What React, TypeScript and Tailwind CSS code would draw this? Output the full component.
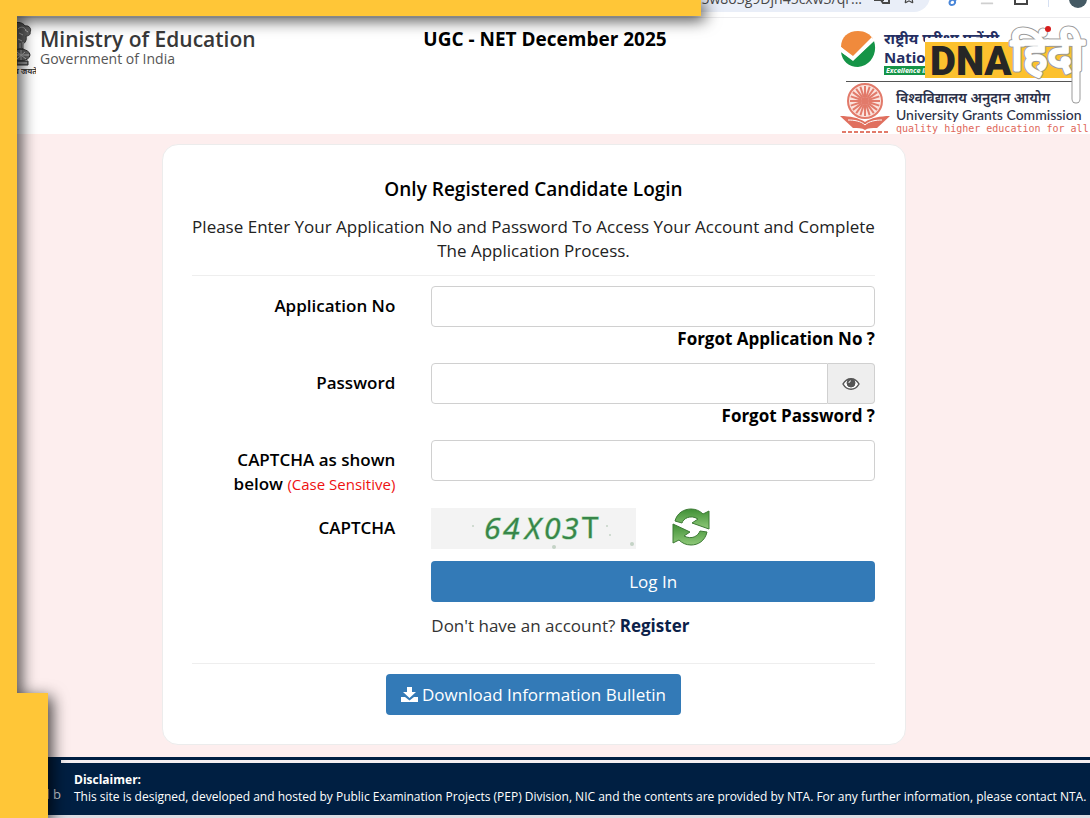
import { useState } from 'react'
import { FaBars, FaRegStar } from 'react-icons/fa'

const inputClasses =
  'h-[41px] w-full min-w-0 border border-[#d0d0d0] bg-white px-3 text-[17px] text-[#333] outline-none focus:border-[#66afe9]'

function BrowserBar() {
  return (
    <div className="flex h-[18px] items-start overflow-hidden border-b border-[#ececee] bg-white">
      <div className="-mt-5 flex h-8 flex-1 items-end justify-end gap-3 rounded-r-2xl bg-[#e9eef8] pr-3.5 pb-1 text-[#474747]">
        <span className="text-[14px] leading-[18px]">1bzc5w8o3g9Djh45cxw3/qr...</span>
        <svg className="mb-1" width="16" height="16" viewBox="0 0 16 16" fill="none" stroke="currentColor" strokeWidth="2">
          <path d="M1 1h8v11H1z" fill="currentColor" />
          <path d="M7 5h8v10H9l-2-3z" />
        </svg>
        <FaRegStar className="mb-1" size={14} />
      </div>
      <div className="-mt-2.5 flex w-[160px] items-center gap-5 pl-4">
        <svg width="14" height="16" viewBox="0 0 14 16" fill="none" stroke="#4a86d8" strokeWidth="2">
          <path d="M12 3 9 10M8 9c-5-1-6 5-2 5 3 0 4-3 2-5" />
        </svg>
        <FaBars className="text-[#cfcfcf]" size={14} />
        <svg width="14" height="16" viewBox="0 0 14 16" fill="none" stroke="#444" strokeWidth="2">
          <path d="M1 1v12h12V1" />
        </svg>
        <span className="h-4 w-px bg-[#d6e0f2]" />
        <span className="size-[18px] shrink-0 rounded-full bg-[#455a64]" />
      </div>
    </div>
  )
}

function Emblem() {
  return (
    <svg className="shrink-0" width="24" height="54" viewBox="0 0 24 54" aria-label="State emblem">
      <g fill="#666" stroke="#333" strokeWidth="1">
        <path d="M0 3c3-4 11-3 13 1 4-1 7 3 5 6 1 3-2 4-4 4 1 4-1 7-3 8v6H0z" />
        <ellipse cx="8" cy="33" rx="10" ry="6" />
        <path d="M0 39h16v4H0z" />
      </g>
      <g stroke="#c4c4c4" fill="none" strokeWidth="1">
        <path d="M6 7c3-3 6-2 8 1M7 11l4 2M13 8l3 2M6 17l4 2M8 21v5M11 20v6M5 33h12M9 28v10M5 30l9 7M13 30l-8 7M6 41h9" />
      </g>
      <text x="2" y="52" fontSize="8" fontWeight="700" fill="#444">
        व जयते
      </text>
    </svg>
  )
}

function NtaLogo() {
  return (
    <svg className="shrink-0" width="36" height="38" viewBox="0 0 36 38" aria-label="NTA">
      <path d="M1 17C1 7 8 1 18 1c7 0 12 3 15 8L13 28z" fill="#f08a3c" />
      <path d="M34 11c4 12-3 25-16 26C9 37 2 31 1 22l12 8z" fill="#159447" />
      <path d="M1 17l12 9L32 7l2 4-21 20L1 22z" fill="#fff" />
    </svg>
  )
}

const spokes = Array.from({ length: 20 }, (_, i) => i * 18)

function UgcLogo() {
  return (
    <svg className="shrink-0" width="50" height="51" viewBox="0 0 50 51" aria-label="UGC">
      <circle cx="25" cy="19" r="17" fill="#fbe3dd" stroke="#e27a6a" strokeWidth="2" />
      {spokes.map((angle) => (
        <path key={angle} d="M25 15V4" stroke="#e27a6a" strokeWidth="2" transform={`rotate(${angle} 25 19)`} />
      ))}
      <circle cx="25" cy="19" r="4" fill="#e27a6a" />
      <path d="M0 34c10 0 19 2 25 6 6-4 15-6 25-6L37 46c-5 0-9 0-12 2-3-2-7-2-12-2z" fill="#e0705f" />
      <path d="M8 38c6 0 13 1 17 5 4-4 11-5 17-5" fill="none" stroke="#fff" strokeWidth="1" />
      <path d="M2 50h46" stroke="#e27a6a" strokeWidth="2" strokeDasharray="4 2" />
    </svg>
  )
}

function DnaLogo() {
  return (
    <svg className="absolute top-0 right-0" width="170" height="90" viewBox="0 0 170 90" aria-label="DNA हिंदी">
      <path d="M5 21h147v39H5z" fill="#fcc12e" />
      <path d="M5 22h90" stroke="#fff" strokeWidth="4" />
      <text x="10" y="57" fontFamily="Roboto" fontWeight="900" fontSize="40" fill="#262626">
        DNA
      </text>
      <g
        fontFamily="Noto Sans, Noto Sans Devanagari, sans-serif"
        fontWeight="400"
        fontSize="46"
        strokeLinecap="round"
        strokeLinejoin="round"
      >
        <text x="91" y="52" fill="#9a9a9a" stroke="#9a9a9a" strokeWidth="5">
          हिंदी
        </text>
        <path d="M156 24v57" stroke="#9a9a9a" strokeWidth="9" />
        <text x="91" y="52" fill="#fff" stroke="#fff" strokeWidth="3">
          हिंदी
        </text>
        <path d="M156 24v57" stroke="#fff" strokeWidth="7" />
      </g>
      <circle cx="128" cy="11" r="3" fill="#d61c1c" />
    </svg>
  )
}

function Header() {
  return (
    <header className="relative grid h-[116px] grid-cols-[1fr_auto_1fr] items-start bg-white">
      <div className="flex items-start gap-1 pt-1 pl-3">
        <Emblem />
        <div className="pt-1 text-[#383838]">
          <p className="text-[21px] leading-[26px] font-semibold">Ministry of Education</p>
          <p className="text-[14px] leading-[14px] text-[#555]">Government of India</p>
        </div>
      </div>
      <h1 className="pt-2 text-[19px] leading-[26px] font-bold text-black">UGC - NET December 2025</h1>
      <div className="w-[250px] justify-self-end overflow-hidden pt-2.5 whitespace-nowrap">
        <div className="mr-4 ml-1.5 flex h-[54px] items-start gap-2 border-b border-[#555]">
          <div className="-ml-1.5 pt-0.5">
            <NtaLogo />
          </div>
          <div className="text-[#242e62]">
            <p className="text-[15px] leading-[20px] font-bold">राष्ट्रीय परीक्षा एजेंसी</p>
            <p className="text-[15px] leading-[18px] font-bold">National Testing Agency</p>
            <p className="w-fit bg-[#159447] px-0.5 text-[7px] leading-[9px] font-bold text-white italic">
              Excellence in Assessment
            </p>
          </div>
        </div>
        <div className="flex items-start gap-1.5">
          <UgcLogo />
          <div className="pt-2 text-[#2b3149]">
            <p className="text-[14px] leading-[16px] font-semibold">विश्वविद्यालय अनुदान आयोग</p>
            <p className="font-[Lato,sans-serif] text-[14px] leading-[17px] font-medium">University Grants Commission</p>
            <p className="font-['DejaVu_Sans_Mono',monospace] text-[10px] leading-[12px] text-[#e0685a]">
              quality higher education for all
            </p>
          </div>
        </div>
      </div>
      <DnaLogo />
    </header>
  )
}

function CaptchaImage() {
  return (
    <svg width="205" height="41" viewBox="0 0 205 41" role="img" aria-label="CAPTCHA text">
      <path d="M0 0h205v41H0z" fill="#f3f3f3" />
      <g fontFamily="Open Sans" fontSize="30" fill="#38864a" stroke="#9bd6a4" strokeWidth="1" paintOrder="stroke">
        <text y="31" fontStyle="italic">
          <tspan x="53">6</tspan>
          <tspan x="72">4</tspan>
          <tspan x="94">X</tspan>
          <tspan x="113">0</tspan>
          <tspan x="131">3</tspan>
        </text>
        <text x="151" y="30">
          T
        </text>
      </g>
      <g fill="#c4d3c6">
        <circle cx="42" cy="18" r="1" />
        <circle cx="176" cy="18" r="1" />
        <circle cx="179" cy="27" r="1" />
        <circle cx="123" cy="39" r="2" />
        <circle cx="201" cy="36" r="2" />
      </g>
    </svg>
  )
}

function RefreshIcon() {
  return (
    <svg width="38" height="38" viewBox="0 0 38 38">
      <defs>
        <linearGradient id="leaf" x1="0" y1="0" x2="0" y2="1">
          <stop offset="0" stopColor="#3f8f35" />
          <stop offset="1" stopColor="#8fc979" />
        </linearGradient>
      </defs>
      <g fill="url(#leaf)" stroke="#3d7a35" strokeWidth="1">
        <path d="M3 13C5 5 12 1 19 1c5 0 9 2 12 5l6-3v18l-17-6 6-4c-8-5-15 0-16 4z" />
        <path d="M35 24c-2 9-9 13-16 13-5 0-9-2-12-5l-6 3V16l17 8-6 4c8 4 14 0 16-5z" />
      </g>
    </svg>
  )
}

function EyeIcon() {
  return (
    <svg width="18" height="14" viewBox="0 0 18 14" fill="none" stroke="#555" strokeWidth="1">
      <path d="M1 7c4-7 12-7 16 0-4 7-12 7-16 0z" fill="#fff" strokeWidth="1.5" />
      <circle cx="9" cy="6" r="4" fill="#555" />
      <path d="M7 6c0-2 1-2 2-2" stroke="#fff" />
    </svg>
  )
}

function DownloadIcon() {
  return (
    <svg width="17" height="16" viewBox="0 0 17 16" fill="currentColor">
      <path d="M6 0h5v5h4L8.500 11 2 5h4z" />
      <path d="M0 10h4l4.500 3.500L13 10h4v5H0z" />
    </svg>
  )
}

function LoginCard() {
  const [showPassword, setShowPassword] = useState(false)

  return (
    <section className="w-full max-w-[744px] rounded-2xl border border-[#ececec] bg-white pt-[31px] pr-[30px] pb-[29px] pl-[29px]">
      <h2 className="text-center text-[19px] leading-[26px] font-semibold text-black">Only Registered Candidate Login</h2>
      <p className="mt-[13px] border-b border-[#eee] pb-3 text-center text-[17px] leading-[24px] text-[#222]">
        Please Enter Your Application No and Password To Access Your Account and Complete The Application Process.
      </p>

      <form
        className="mt-2.5 grid grid-cols-[203fr_443fr] gap-x-9 gap-y-3 text-[17px] leading-[24px]"
        onSubmit={(e) => e.preventDefault()}
      >
        <label htmlFor="application-no" className="pt-2 text-right font-semibold text-black">
          Application No
        </label>
        <div className="text-right">
          <input id="application-no" type="text" className={`${inputClasses} block rounded`} />
          <a href="#forgot-application" className="block font-bold text-black">
            Forgot Application No ?
          </a>
        </div>

        <label htmlFor="password" className="pt-2 text-right font-semibold text-black">
          Password
        </label>
        <div className="text-right">
          <div className="flex">
            <input id="password" type={showPassword ? 'text' : 'password'} className={`${inputClasses} rounded-l`} />
            <button
              type="button"
              aria-label="Show password"
              className="flex w-[47px] shrink-0 items-center justify-center rounded-r border border-l-0 border-[#d0d0d0] bg-[#eee]"
              onClick={() => setShowPassword(!showPassword)}
            >
              <EyeIcon />
            </button>
          </div>
          <a href="#forgot-password" className="block font-bold text-black">
            Forgot Password ?
          </a>
        </div>

        <label htmlFor="captcha" className="pt-2 text-right font-semibold text-black">
          CAPTCHA as shown
          <br />
          below <span className="text-[15px] font-normal text-[#ee1111]">(Case Sensitive)</span>
        </label>
        <input id="captcha" type="text" className={`${inputClasses} rounded`} />

        <span className="pt-2 text-right font-semibold text-black">CAPTCHA</span>
        <div className="flex items-start gap-9">
          <CaptchaImage />
          <button type="button" aria-label="Refresh captcha">
            <RefreshIcon />
          </button>
        </div>

        <button type="submit" className="col-start-2 h-[41px] rounded bg-[#337ab7] text-white">
          Log In
        </button>
        <p className="col-start-2 text-[#333]">
          Don't have an account?{' '}
          <a href="#register" className="font-bold text-[#0b2149]">
            Register
          </a>
        </p>
      </form>

      <div className="mt-[25px] flex justify-center border-t border-[#eee] pt-2.5">
        <button type="button" className="flex h-[41px] items-center gap-1 rounded bg-[#337ab7] px-[15px] text-[17px] text-white">
          <DownloadIcon />
          Download Information Bulletin
        </button>
      </div>
    </section>
  )
}

function Footer() {
  return (
    <footer className="border-b-[3px] border-[#dcdce2] bg-[#001f42] pt-[3px] text-white">
      <div className="flex">
        <div className="flex h-[55px] w-[61px] shrink-0 items-end justify-end overflow-hidden pb-3 text-[13px] leading-[18px] whitespace-nowrap text-[#ccd2da]">
          <span>Designed b</span>
        </div>
        <div className="min-w-0 flex-1 border-t-[3px] border-[#f5eff2] pt-2 pl-[13px] text-[12px] leading-[17px]">
          <p className="font-bold">Disclaimer:</p>
          <p>
            This site is designed, developed and hosted by Public Examination Projects (PEP) Division, NIC and the contents
            are provided by NTA. For any further information, please contact NTA.
          </p>
        </div>
      </div>
    </footer>
  )
}

// Yellow branding frame that lies over the page
function Frame() {
  return (
    <div className="pointer-events-none absolute inset-0 drop-shadow-[4px_4px_8px_rgba(0,0,0,0.75)]">
      <div className="absolute top-0 left-0 h-4 w-[701px] bg-[#ffc637]" />
      <div className="absolute inset-y-0 left-0 w-[17px] bg-[#ffc637]" />
      <div className="absolute bottom-0 left-0 h-[125px] w-12 bg-[#ffc637]" />
    </div>
  )
}

export default function App() {
  return (
    <div className="relative flex min-h-screen flex-col overflow-hidden bg-[#fdeeee] font-['Open_Sans','Noto_Sans',sans-serif]">
      <BrowserBar />
      <Header />
      <main className="flex flex-1 items-start justify-center pt-2.5 pr-[22px] pb-3">
        <LoginCard />
      </main>
      <Footer />
      <Frame />
    </div>
  )
}
